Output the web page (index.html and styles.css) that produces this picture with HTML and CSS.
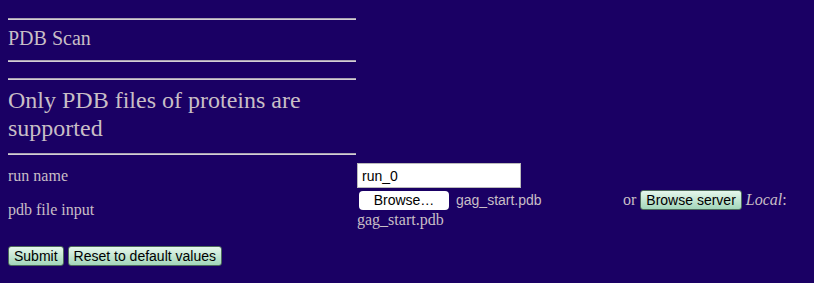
FILE: index.html
```html
<!DOCTYPE html>
<html lang="en">
<head>
  <meta charset="UTF-8">
  <meta name="viewport" content="width=device-width, initial-scale=1.0">
  <title>PDB Scan</title>
  <link rel="stylesheet" href="styles.css">
</head>
<body>
  <div class="page">
    <!-- Tool title -->
    <div class="title-block">
      <hr>
      <h3 class="app-title">PDB Scan</h3>
      <hr>
    </div>

    <!-- Notice -->
    <div class="notice-block">
      <hr>
      <h2 class="notice">Only PDB files of proteins are supported</h2>
      <hr>
    </div>

    <form class="params-form" action="#" method="post">
      <table class="params">
        <tr>
          <td class="label">run name</td>
          <td class="value"><input type="text" class="text-input" name="runName" value="run_0"></td>
        </tr>
        <tr>
          <td class="label">pdb file input</td>
          <td class="value file-cell">
            <span class="file-input"><span class="file-button">Browse…</span><span class="file-name">gag_start.pdb</span></span>
            or <button type="button" class="button">Browse server</button> <i>Local</i>: gag_start.pdb
          </td>
        </tr>
      </table>

      <div class="actions">
        <button type="submit" class="button">Submit</button>
        <button type="reset" class="button">Reset to default values</button>
      </div>
    </form>
  </div>
</body>
</html>
```

FILE: styles.css
```css
body {
  margin: 8px;
  background-color: #1a0064;
  color: #c8bec6;
  font-family: "Liberation Serif", "Times New Roman", serif;
  font-size: 16px;
}
hr {
  margin: 0;
  height: 0;
  border: 0;
  border-top: 1px solid #a8a2b0;
  border-bottom: 1px solid #d4ced6;
}
.title-block,
.notice-block {
  width: 348px;
}
.title-block {
  padding-top: 10px;
}
.app-title {
  margin: 7px 0 10px;
  font-size: 20px;
  line-height: 23px;
  font-weight: normal;
}
.notice-block {
  margin-top: 16px;
}
.notice {
  margin: 6px 0 11px;
  font-size: 24px;
  line-height: 28px;
  font-weight: normal;
}
.params {
  margin-top: 7px;
  border-spacing: 0;
}
.params td {
  padding: 1px 0;
  vertical-align: middle;
}
.params .label {
  width: 349px;
}
.params .value {
  width: 449px;
}
.text-input {
  box-sizing: border-box;
  width: 164px;
  height: 25px;
  margin: 0;
  padding: 2px 4px;
  border: 1px solid #bbb;
  background: #fff;
  font-family: "Liberation Sans", Arial, sans-serif;
  font-size: 14px;
  color: #000;
}
.file-cell {
  padding-top: 0;
  line-height: 20px;
}
.file-input {
  display: inline-block;
  width: 262px;
  font-family: "Liberation Sans", Arial, sans-serif;
  font-size: 14px;
}
.file-button {
  display: inline-block;
  box-sizing: border-box;
  width: 90px;
  height: 19px;
  margin-left: 2px;
  border-radius: 4px;
  background: #fff;
  color: #000;
  text-align: center;
  line-height: 19px;
}
.file-name {
  margin-left: 7px;
}
.button {
  box-sizing: border-box;
  height: 20px;
  margin: 0;
  padding: 0 5px;
  border: 1px solid #4d6b5c;
  border-radius: 3px;
  background: linear-gradient(#e6f7ec, #a3d6ba);
  color: #000;
  font-family: "Liberation Sans", Arial, sans-serif;
  font-size: 14px;
  line-height: 18px;
  cursor: pointer;
}
.actions {
  margin-top: 15px;
}
```
